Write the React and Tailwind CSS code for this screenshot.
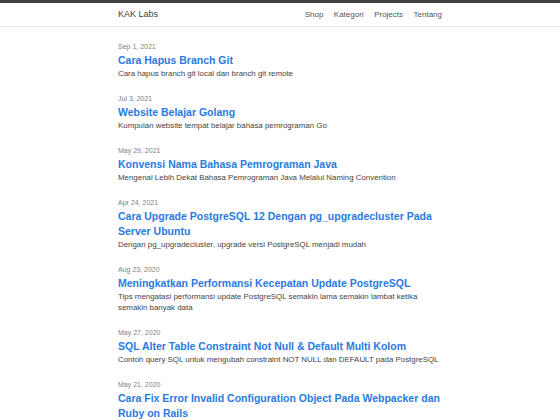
import React from "react";

const posts = [
  { date: "Sep 1, 2021", title: "Cara Hapus Branch Git", desc: "Cara hapus branch git local dan branch git remote" },
  { date: "Jul 3, 2021", title: "Website Belajar Golang", desc: "Kumpulan website tempat belajar bahasa pemrograman Go" },
  { date: "May 29, 2021", title: "Konvensi Nama Bahasa Pemrograman Java", desc: "Mengenal Lebih Dekat Bahasa Pemrograman Java Melalui Naming Convention" },
  { date: "Apr 24, 2021", title: "Cara Upgrade PostgreSQL 12 Dengan pg_upgradecluster Pada Server Ubuntu", desc: "Dengan pg_upgradecluster, upgrade versi PostgreSQL menjadi mudah" },
  { date: "Aug 23, 2020", title: "Meningkatkan Performansi Kecepatan Update PostgreSQL", desc: "Tips mengatasi performansi update PostgreSQL semakin lama semakin lambat ketika semakin banyak data" },
  { date: "May 27, 2020", title: "SQL Alter Table Constraint Not Null & Default Multi Kolom", desc: "Contoh query SQL untuk mengubah constraint NOT NULL dan DEFAULT pada PostgreSQL" },
  { date: "May 21, 2020", title: "Cara Fix Error Invalid Configuration Object Pada Webpacker dan Ruby on Rails", desc: "Solusi error invalid configuration object webpacker pada Ruby on Rails" },
];

const links = ["Shop", "Kategori", "Projects", "Tentang"];

export default function App() {
  return (
    <div className="min-h-screen bg-white font-[family-name:Liberation_Sans,Arial,sans-serif] text-[#111]">
      <header className="border-t-[3px] border-[#424242] border-b border-b-[#e8e8e8]">
        <div className="mx-auto w-[324px] h-[23px] flex items-center justify-between">
          <a className="text-[9px] text-[#424242]">KAK Labs</a>
          <nav className="flex gap-[10.5px] text-[8px] text-[#555]">
            {links.map((l) => (
              <a key={l}>{l}</a>
            ))}
          </nav>
        </div>
      </header>

      <main className="mx-auto w-[324px] pt-[12.5px]">
        <ul>
          {posts.map((p) => (
            <li key={p.date} className="mb-[13.1px]">
              <span className="block text-[7px] leading-[13px] text-[#828282]">{p.date}</span>
              <h3 className="text-[10.5px] leading-[15px] font-bold text-[#2a7ae2]">
                <a>{p.title}</a>
              </h3>
              <p className="text-[7.9px] leading-[11px] text-[#444]">{p.desc}</p>
            </li>
          ))}
        </ul>
      </main>
    </div>
  );
}
